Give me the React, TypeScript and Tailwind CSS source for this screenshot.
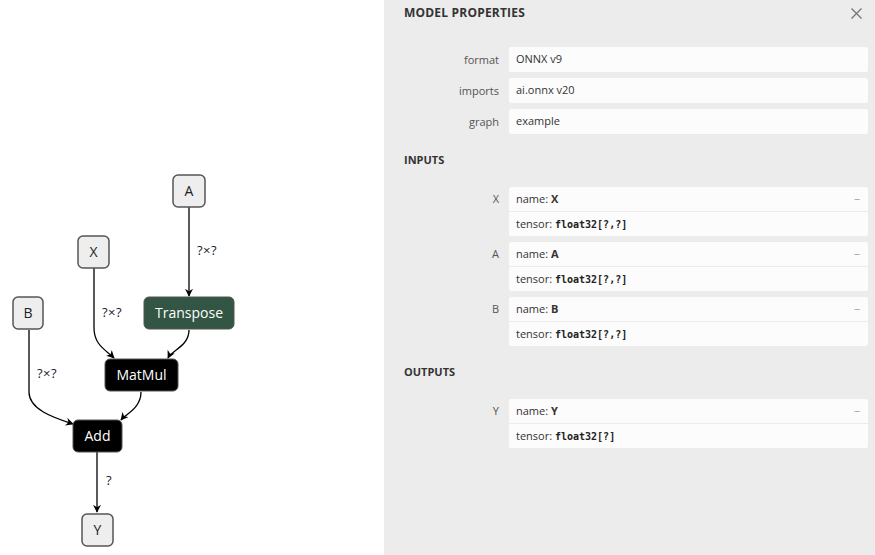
import { Fragment } from "react";

type Port = { label: string; name: string; type: string };

const props = [
  { label: "format", value: "ONNX v9" },
  { label: "imports", value: "ai.onnx v20" },
  { label: "graph", value: "example" },
];

const inputs: Port[] = [
  { label: "X", name: "X", type: "float32[?,?]" },
  { label: "A", name: "A", type: "float32[?,?]" },
  { label: "B", name: "B", type: "float32[?,?]" },
];

const outputs: Port[] = [{ label: "Y", name: "Y", type: "float32[?]" }];

const font = "'Open Sans', 'Noto Sans', sans-serif";

function Graph() {
  const io = (x: number, y: number, w: number, t: string) => (
    <g key={t}>
      <rect x={x} y={y} width={w} height={32} rx={5} fill="#eeeeee" stroke="#555" strokeWidth={1.5} />
      <text x={x + w / 2} y={y + 21} textAnchor="middle" fontSize={14} fill="#222" fontFamily={font}>
        {t}
      </text>
    </g>
  );
  const op = (x: number, y: number, w: number, t: string, fill: string) => (
    <g key={t}>
      <rect x={x} y={y} width={w} height={32} rx={5} fill={fill} stroke="#555" strokeWidth={1} />
      <text x={x + w / 2} y={y + 21} textAnchor="middle" fontSize={14} fill="#fff" fontFamily={font}>
        {t}
      </text>
    </g>
  );
  const lbl = (x: number, y: number, t: string) => (
    <text x={x} y={y} fontSize={13} fill="#1a1a2a" fontFamily={font} letterSpacing={0.5}>
      {t}
    </text>
  );
  return (
    <svg width={384} height={555} className="block">
      <defs>
        <marker id="arrow" viewBox="0 0 10 10" refX={9} refY={5} markerWidth={8} markerHeight={8} markerUnits="userSpaceOnUse" orient="auto">
          <path d="M0 0 L10 5 L0 10 L3 5 Z" fill="#000" />
        </marker>
      </defs>
      <g fill="none" stroke="#000" strokeWidth={1.3} markerEnd="url(#arrow)">
        <path d="M189 207 L189 296" />
        <path d="M94 268 L94 328 C94 345 106 350 114 358" />
        <path d="M189 330 C189 346 172 350 168 358" />
        <path d="M29 330 L29 392 C29 410 55 418 73 424" />
        <path d="M141 392 C141 408 126 414 121 420" />
        <path d="M97 452 L97 512" />
      </g>
      {lbl(197, 255, "?×?")}
      {lbl(102, 317, "?×?")}
      {lbl(37, 378, "?×?")}
      {lbl(106, 485, "?")}
      {io(173, 175, 32, "A")}
      {io(78, 236, 31, "X")}
      {io(13, 297, 30, "B")}
      {io(82, 514, 31, "Y")}
      {op(144, 297, 90, "Transpose", "#335544")}
      {op(105, 359, 73, "MatMul", "#000")}
      {op(73, 420, 49, "Add", "#000")}
    </svg>
  );
}

function Section({ title, items }: { title: string; items: Port[] }) {
  return (
    <div className="mt-[18px]">
      <div className="h-4 pl-5 text-[11px] font-bold leading-4 text-[#333]">{title}</div>
      <div className="mt-[19px] flex flex-col gap-[6px]">
        {items.map((p) => (
          <div key={p.label} className="flex">
            <div className="w-[115px] shrink-0 pl-5 text-right text-[11px] leading-6 text-[#555]">{p.label}</div>
            <div className="ml-[10px] mr-[7px] flex-1 rounded-[2px] bg-[#fcfcfc] text-[11px] text-[#333]">
              <div className="flex h-[25px] items-center justify-between border-b border-[#ececec] pl-[7px] pr-[8px]">
                <span>
                  name: <b className="font-bold">{p.name}</b>
                </span>
                <span className="text-[#999]">−</span>
              </div>
              <div className="flex h-6 items-center pl-[7px]">
                tensor:&nbsp;
                <span className="text-[10px] font-semibold text-[#222]" style={{ fontFamily: "'DejaVu Sans Mono', monospace" }}>
                  {p.type}
                </span>
              </div>
            </div>
          </div>
        ))}
      </div>
    </div>
  );
}

export default function App() {
  return (
    <div className="flex h-[555px] w-[875px] overflow-hidden bg-white" style={{ fontFamily: font }}>
      <div className="w-[384px] shrink-0">
        <Graph />
      </div>
      <div className="flex-1 bg-[#ececec]">
        <div className="flex h-[26px] items-center justify-between pl-5 pr-[13px]">
          <span className="text-[12px] font-bold tracking-[0.2px] text-[#333]">MODEL PROPERTIES</span>
          <svg width={11} height={11} viewBox="0 0 11 11" className="block">
            <path d="M0.5 0.5 L10.5 10.5 M10.5 0.5 L0.5 10.5" stroke="#777" strokeWidth={1.4} />
          </svg>
        </div>
        <div className="mt-[21px] flex flex-col gap-[6px]">
          {props.map((p) => (
            <Fragment key={p.label}>
              <div className="flex h-[25px]">
                <div className="w-[115px] shrink-0 pl-5 text-right text-[11px] leading-[25px] text-[#555]">{p.label}</div>
                <div className="ml-[10px] mr-[7px] flex flex-1 items-center rounded-[2px] bg-[#fcfcfc] pl-[7px] text-[11px] text-[#333]">
                  {p.value}
                </div>
              </div>
            </Fragment>
          ))}
        </div>
        <Section title="INPUTS" items={inputs} />
        <Section title="OUTPUTS" items={outputs} />
      </div>
    </div>
  );
}
